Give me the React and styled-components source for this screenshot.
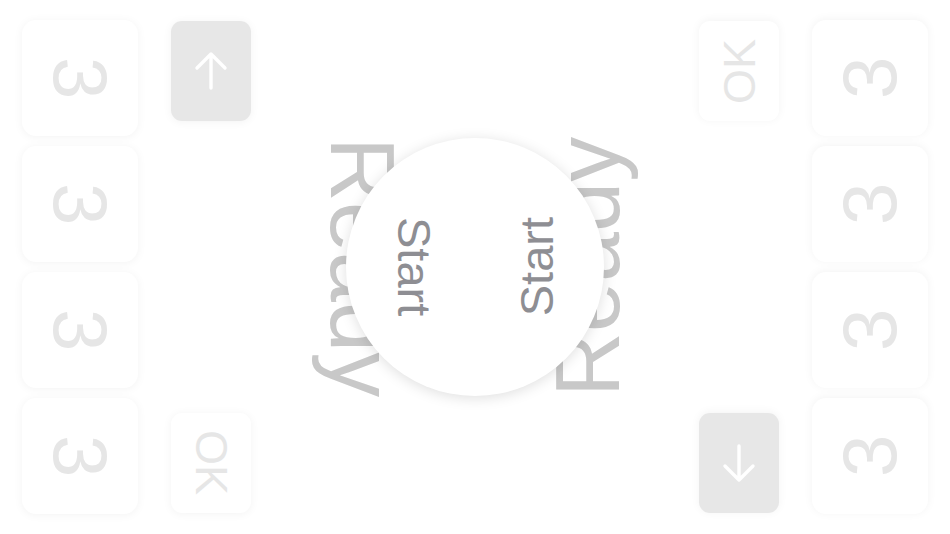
import React from 'react'
import styled, { createGlobalStyle } from 'styled-components'

const GlobalStyle = createGlobalStyle`
    html, body {
        margin: 0;
        padding: 0;
        background: #ffffff;
        font-family: 'Liberation Sans', Arial, sans-serif;
    }
`

const UpArrow = () => (
    <svg width='34' height='40' viewBox='0 0 34 40' fill='none'>
        <path
            d='M3 17 L17 3 L31 17 M17 3 V37'
            stroke='#ffffff'
            strokeWidth='3.4'
            strokeLinecap='round'
            strokeLinejoin='round'
        />
    </svg>
)

const PlayerHalf = ({ flipped }) => (
    <Half $flipped={flipped}>
        <CardColumn>
            {[0, 1, 2, 3].map((i) => (
                <Card key={i}>
                    <CardDigit>3</CardDigit>
                </Card>
            ))}
        </CardColumn>
        <ButtonColumn>
            <ArrowButton>
                <UpArrow />
            </ArrowButton>
            <OkButton>
                <OkLabel>OK</OkLabel>
            </OkButton>
        </ButtonColumn>
        <Stage>
            <Ready>Ready</Ready>
        </Stage>
    </Half>
)

const App = () => {
    return (
        <>
            <GlobalStyle />
            <Screen>
                <PlayerHalf />
                <PlayerHalf flipped />
                <StartCircle>
                    <StartLabel>Start</StartLabel>
                    <StartLabel $flipped>Start</StartLabel>
                </StartCircle>
            </Screen>
        </>
    )
}

export default App

const Screen = styled.div`
    position: relative;
    width: 950px;
    height: 534px;
    display: flex;
    overflow: hidden;
    background: #ffffff;
`

const Half = styled.div`
    width: 475px;
    height: 534px;
    display: flex;
    transform: ${(props) => (props.$flipped ? 'rotate(180deg)' : 'none')};
`

const CardColumn = styled.div`
    display: flex;
    flex-direction: column;
    gap: 10px;
    padding: 20px 0 0 22px;
`

const Card = styled.div`
    width: 116px;
    height: 116px;
    border-radius: 14px;
    background: #ffffff;
    box-shadow: 0 1px 10px rgba(0, 0, 0, 0.05);
    display: flex;
    align-items: center;
    justify-content: center;
`

const CardDigit = styled.span`
    writing-mode: vertical-rl;
    font-size: 76px;
    line-height: 1;
    color: #e6e6e6;
`

const ButtonColumn = styled.div`
    width: 80px;
    margin-left: 33px;
    padding: 21px 0;
    display: flex;
    flex-direction: column;
    justify-content: space-between;
`

const ArrowButton = styled.div`
    height: 100px;
    border-radius: 11px;
    background: #e7e7e7;
    box-shadow: 0 1px 10px rgba(0, 0, 0, 0.05);
    display: flex;
    align-items: center;
    justify-content: center;
`

const OkButton = styled(ArrowButton)`
    background: #ffffff;
`

const OkLabel = styled.span`
    writing-mode: vertical-rl;
    font-size: 45px;
    line-height: 1;
    color: #e6e6e6;
`

const Stage = styled.div`
    flex: 1;
    display: flex;
    align-items: center;
    padding-left: 66px;
`

const Ready = styled.span`
    writing-mode: vertical-rl;
    font-size: 90px;
    line-height: 1;
    color: #c8c8c8;
`

const StartCircle = styled.div`
    position: absolute;
    left: 346px;
    top: 138px;
    width: 258px;
    height: 258px;
    border-radius: 50%;
    background: #ffffff;
    box-shadow: 0 2px 14px rgba(0, 0, 0, 0.13);
    display: flex;
    align-items: center;
    justify-content: space-between;
    padding: 0 44px 0 45px;
    box-sizing: border-box;
`

const StartLabel = styled.span`
    writing-mode: vertical-rl;
    font-size: 47px;
    line-height: 1;
    color: #8e8e93;
    transform: ${(props) => (props.$flipped ? 'rotate(180deg)' : 'none')};
`
